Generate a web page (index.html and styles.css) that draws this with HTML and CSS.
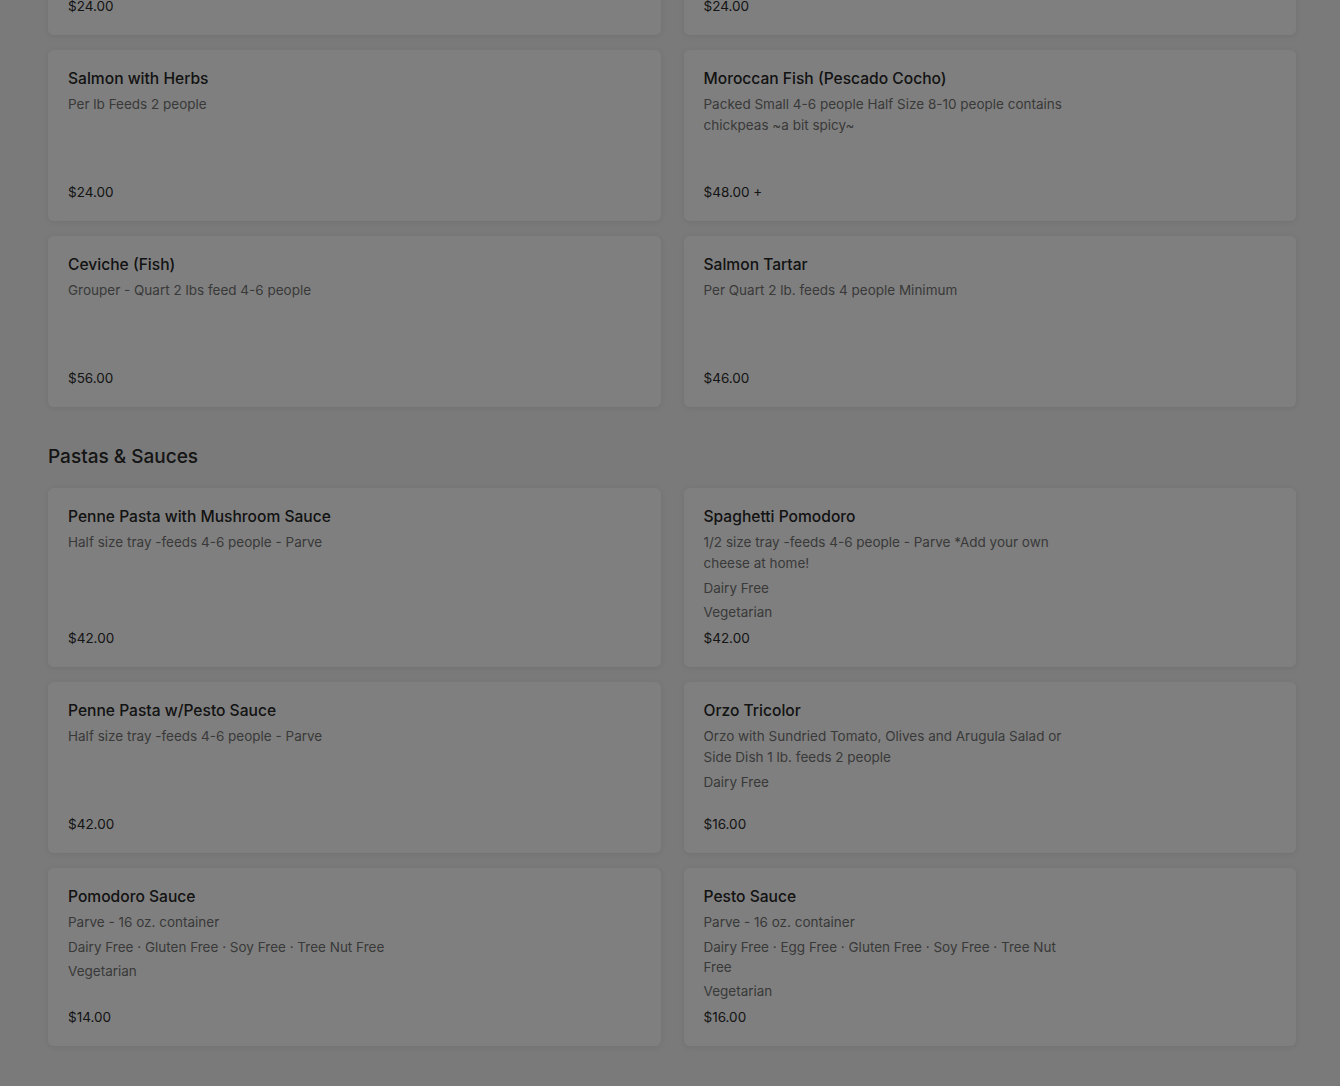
FILE: index.html
```html
<!DOCTYPE html>
<html lang="en">
<head>
<meta charset="utf-8">
<title>Menu</title>
<link rel="stylesheet" href="styles.css">
</head>
<body>
<main class="menu">
  <section class="group group-prev">
    <div class="grid">
      <article class="card">
        <div class="info">
          <h3 class="name">Salmon Teriyaki</h3>
          <p class="desc">Per lb Feeds 2 people</p>
          <p class="price">$24.00</p>
        </div>
      </article>
      <article class="card">
        <div class="info">
          <h3 class="name">Salmon Glazed</h3>
          <p class="desc">Per lb Feeds 2 people</p>
          <p class="price">$24.00</p>
        </div>
      </article>
      <article class="card">
        <div class="info">
          <h3 class="name">Salmon with Herbs</h3>
          <p class="desc">Per lb Feeds 2 people</p>
          <p class="price">$24.00</p>
        </div>
      </article>
      <article class="card">
        <div class="info">
          <h3 class="name">Moroccan Fish (Pescado Cocho)</h3>
          <p class="desc">Packed Small 4-6 people Half Size 8-10 people contains chickpeas ~a bit spicy~</p>
          <p class="price">$48.00 +</p>
        </div>
      </article>
      <article class="card">
        <div class="info">
          <h3 class="name">Ceviche (Fish)</h3>
          <p class="desc">Grouper - Quart 2 lbs feed 4-6 people</p>
          <p class="price">$56.00</p>
        </div>
      </article>
      <article class="card">
        <div class="info">
          <h3 class="name">Salmon Tartar</h3>
          <p class="desc">Per Quart 2 lb. feeds 4 people Minimum</p>
          <p class="price">$46.00</p>
        </div>
      </article>
    </div>
  </section>

  <section class="group">
    <h2 class="group-title">Pastas &amp; Sauces</h2>
    <div class="grid">
      <article class="card">
        <div class="info">
          <h3 class="name">Penne Pasta with Mushroom Sauce</h3>
          <p class="desc">Half size tray -feeds 4-6 people - Parve</p>
          <p class="price">$42.00</p>
        </div>
      </article>
      <article class="card">
        <div class="info">
          <h3 class="name">Spaghetti Pomodoro</h3>
          <p class="desc">1/2 size tray -feeds 4-6 people - Parve *Add your own cheese at home!</p>
          <p class="tags">Dairy Free</p>
          <p class="tags">Vegetarian</p>
          <p class="price">$42.00</p>
        </div>
      </article>
      <article class="card">
        <div class="info">
          <h3 class="name">Penne Pasta w/Pesto Sauce</h3>
          <p class="desc">Half size tray -feeds 4-6 people - Parve</p>
          <p class="price">$42.00</p>
        </div>
      </article>
      <article class="card">
        <div class="info">
          <h3 class="name">Orzo Tricolor</h3>
          <p class="desc">Orzo with Sundried Tomato, Olives and Arugula Salad or Side Dish 1 lb. feeds 2 people</p>
          <p class="tags">Dairy Free</p>
          <p class="price">$16.00</p>
        </div>
      </article>
      <article class="card">
        <div class="info">
          <h3 class="name">Pomodoro Sauce</h3>
          <p class="desc">Parve - 16 oz. container</p>
          <p class="tags">Dairy Free · Gluten Free · Soy Free · Tree Nut Free</p>
          <p class="tags">Vegetarian</p>
          <p class="price">$14.00</p>
        </div>
      </article>
      <article class="card">
        <div class="info">
          <h3 class="name">Pesto Sauce</h3>
          <p class="desc">Parve - 16 oz. container</p>
          <p class="tags">Dairy Free · Egg Free · Gluten Free · Soy Free · Tree Nut Free</p>
          <p class="tags">Vegetarian</p>
          <p class="price">$16.00</p>
        </div>
      </article>
    </div>
  </section>
</main>
<div class="backdrop"></div>
</body>
</html>
```

FILE: styles.css
```css
* { box-sizing: border-box; }

html, body {
  margin: 0;
  padding: 0;
}

body {
  background: #f4f4f4;
  font-family: "Inter", "Liberation Sans", sans-serif;
  color: #333;
  overflow: hidden;
  height: 1086px;
}

.menu {
  width: 1248px;
  margin: -136px 0 0 48px;
}

.group + .group {
  margin-top: 36px;
}

.group-title {
  margin: 0 0 17px;
  font-size: 19px;
  line-height: 28px;
  font-weight: 500;
  color: #2a2a2a;
}

.grid {
  display: grid;
  grid-template-columns: 1fr 1fr;
  column-gap: 23px;
  row-gap: 15px;
}

.card {
  background: #fff;
  border-radius: 6px;
  box-shadow: 0 1px 6px rgba(0, 0, 0, 0.08);
  padding: 17px 20px 19px;
  min-height: 171px;
  display: flex;
}

.info {
  width: 372px;
  display: flex;
  flex-direction: column;
}

.name {
  margin: 0 0 3px;
  font-size: 15.6px;
  line-height: 24px;
  font-weight: 500;
  color: #262626;
}

.desc {
  margin: 0;
  font-size: 13.5px;
  line-height: 21px;
  color: #737373;
}

.tags {
  margin: 4px 0 0;
  font-size: 13.5px;
  line-height: 20px;
  color: #737373;
}

.price {
  margin: auto 0 0;
  padding-top: 6px;
  font-size: 13.5px;
  line-height: 20px;
  color: #2a2a2a;
}

.backdrop {
  position: fixed;
  inset: 0;
  background: rgba(0, 0, 0, 0.5);
}
```
